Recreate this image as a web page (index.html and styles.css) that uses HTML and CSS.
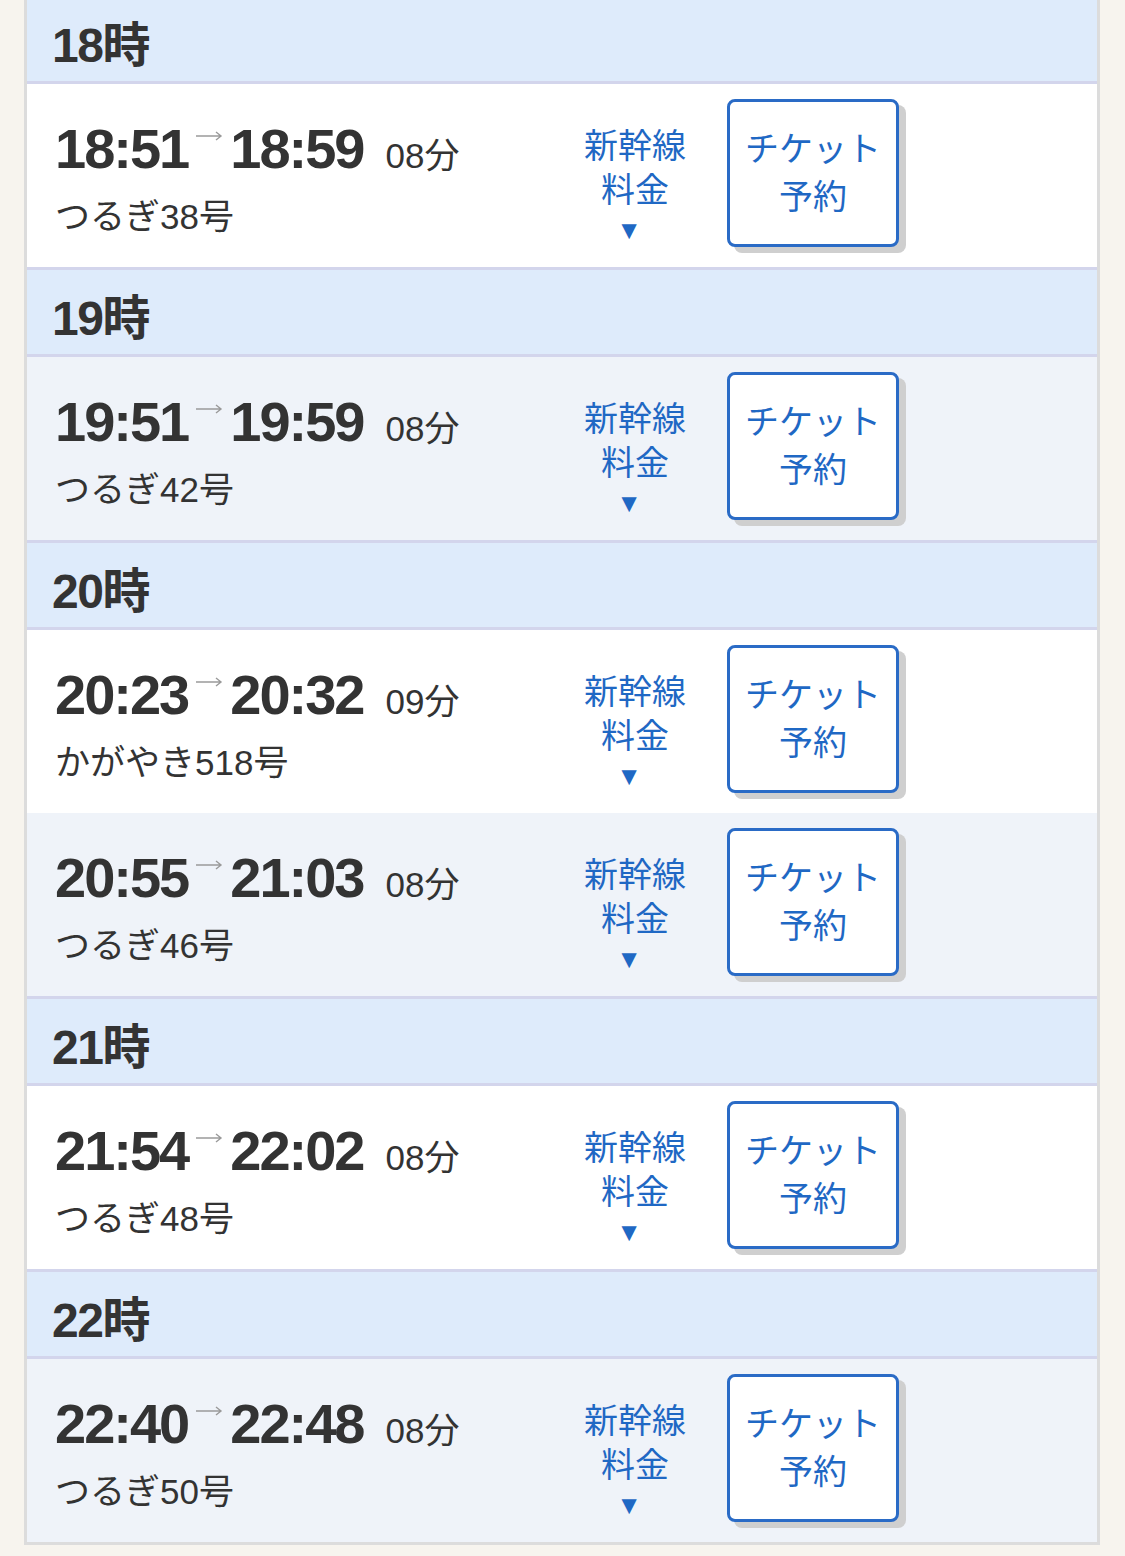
FILE: index.html
```html
<!DOCTYPE html>
<html lang="ja">
<head>
    <meta charset="UTF-8">
    <meta name="viewport" content="width=device-width, initial-scale=1.0">
    <title>時刻表</title>
    <link rel="stylesheet" href="styles.css">
</head>
<body>

    <div class="timetable">

        <section class="hour-group">
            <h2 class="hour">18時</h2>
            <div class="train">
                <div class="train-info">
                    <div class="times"><span class="time">18:51</span><svg class="arrow" viewBox="0 0 28 12"><path d="M1 6H26M21 2L26 6L21 10"/></svg><span class="time">18:59</span><span class="duration">08分</span></div>
                    <div class="name">つるぎ38号</div>
                </div>
                <a class="fare" href="#">新幹線<br>料金<span class="caret">▼</span></a>
                <a class="ticket" href="#">チケット<br>予約</a>
            </div>
        </section>

        <section class="hour-group">
            <h2 class="hour">19時</h2>
            <div class="train alt">
                <div class="train-info">
                    <div class="times"><span class="time">19:51</span><svg class="arrow" viewBox="0 0 28 12"><path d="M1 6H26M21 2L26 6L21 10"/></svg><span class="time">19:59</span><span class="duration">08分</span></div>
                    <div class="name">つるぎ42号</div>
                </div>
                <a class="fare" href="#">新幹線<br>料金<span class="caret">▼</span></a>
                <a class="ticket" href="#">チケット<br>予約</a>
            </div>
        </section>

        <section class="hour-group">
            <h2 class="hour">20時</h2>
            <div class="train">
                <div class="train-info">
                    <div class="times"><span class="time">20:23</span><svg class="arrow" viewBox="0 0 28 12"><path d="M1 6H26M21 2L26 6L21 10"/></svg><span class="time">20:32</span><span class="duration">09分</span></div>
                    <div class="name">かがやき518号</div>
                </div>
                <a class="fare" href="#">新幹線<br>料金<span class="caret">▼</span></a>
                <a class="ticket" href="#">チケット<br>予約</a>
            </div>
            <div class="train alt">
                <div class="train-info">
                    <div class="times"><span class="time">20:55</span><svg class="arrow" viewBox="0 0 28 12"><path d="M1 6H26M21 2L26 6L21 10"/></svg><span class="time">21:03</span><span class="duration">08分</span></div>
                    <div class="name">つるぎ46号</div>
                </div>
                <a class="fare" href="#">新幹線<br>料金<span class="caret">▼</span></a>
                <a class="ticket" href="#">チケット<br>予約</a>
            </div>
        </section>

        <section class="hour-group">
            <h2 class="hour">21時</h2>
            <div class="train">
                <div class="train-info">
                    <div class="times"><span class="time">21:54</span><svg class="arrow" viewBox="0 0 28 12"><path d="M1 6H26M21 2L26 6L21 10"/></svg><span class="time">22:02</span><span class="duration">08分</span></div>
                    <div class="name">つるぎ48号</div>
                </div>
                <a class="fare" href="#">新幹線<br>料金<span class="caret">▼</span></a>
                <a class="ticket" href="#">チケット<br>予約</a>
            </div>
        </section>

        <section class="hour-group">
            <h2 class="hour">22時</h2>
            <div class="train alt">
                <div class="train-info">
                    <div class="times"><span class="time">22:40</span><svg class="arrow" viewBox="0 0 28 12"><path d="M1 6H26M21 2L26 6L21 10"/></svg><span class="time">22:48</span><span class="duration">08分</span></div>
                    <div class="name">つるぎ50号</div>
                </div>
                <a class="fare" href="#">新幹線<br>料金<span class="caret">▼</span></a>
                <a class="ticket" href="#">チケット<br>予約</a>
            </div>
        </section>

    </div>

</body>
</html>
```

FILE: styles.css
```css
body {
    margin: 0;
    background-color: #f7f4ee;
    font-family: "Liberation Sans", "Noto Sans CJK JP", sans-serif;
    color: #333;
}

/* the list is scrolled a few pixels past its top */
.timetable {
    margin: -6px 25px 0 24px;
    border: 3px solid #dcdcdc;
    border-top: 0;
    background-color: #fff;
}

.hour-group {
    border-top: 3px solid #d3d5ec;
}

.hour {
    margin: 0;
    height: 87px;
    box-sizing: border-box;
    padding: 13px 0 0 25px;
    line-height: 71px;
    font-size: 48px;
    font-weight: bold;
    letter-spacing: -1.5px;
    background-color: #deebfb;
    border-bottom: 3px solid #d3d5ec;
}

.train {
    display: flex;
    align-items: flex-start;
    height: 183px;
    box-sizing: border-box;
    padding: 15px 0 0 28px;
    background-color: #fff;
}

.train.alt {
    background-color: #eff3f9;
}

.train-info {
    width: 520px;
    padding-top: 18px;
}

.times {
    height: 64px;
    line-height: 64px;
    white-space: nowrap;
}

.time {
    font-size: 56px;
    font-weight: bold;
    letter-spacing: -2px;
}

.arrow {
    width: 28px;
    height: 12px;
    margin: 0 7px;
    vertical-align: 26px;
    fill: none;
    stroke: #9a9a9a;
    stroke-width: 1.4;
}

.duration {
    font-size: 35px;
    margin-left: 22px;
}

.name {
    margin-top: 14px;
    font-size: 35px;
    line-height: 44px;
}

.fare {
    width: 120px;
    padding-top: 25px;
    text-align: center;
    font-size: 34px;
    line-height: 44px;
    color: #1f68c4;
    text-decoration: none;
}

.caret {
    display: block;
    font-size: 26px;
    line-height: 36px;
    padding-right: 12px;
}

.ticket {
    display: flex;
    align-items: center;
    justify-content: center;
    margin-left: 32px;
    width: 172px;
    height: 148px;
    box-sizing: border-box;
    border: 3px solid #2a6bc6;
    border-radius: 8px;
    box-shadow: 7px 6px 0 #cfcfcf;
    background-color: #fff;
    text-align: center;
    font-size: 34px;
    line-height: 48px;
    color: #1f68c4;
    text-decoration: none;
}
```
